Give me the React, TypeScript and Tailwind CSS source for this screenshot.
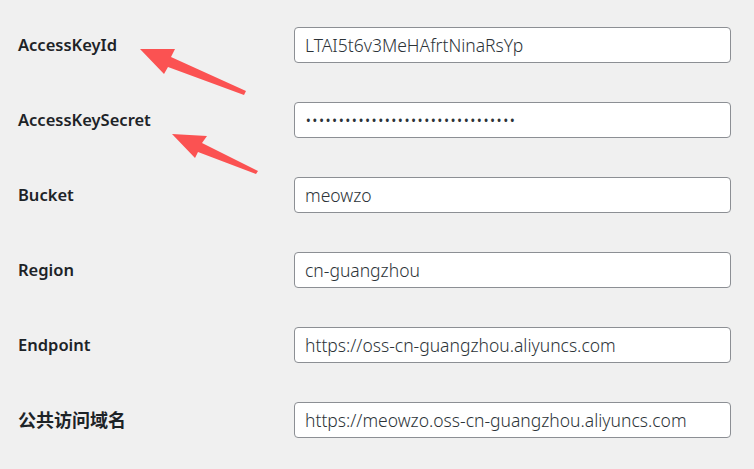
import React from "react";

type Field = {
    label: string;
    value: string;
    secret?: boolean;
    cjk?: boolean;
};

const fields: Field[] = [
    {label: "AccessKeyId", value: "LTAI5t6v3MeHAfrtNinaRsYp"},
    {label: "AccessKeySecret", value: "abcdefghijklmnopqrstuvwxyz123456", secret: true},
    {label: "Bucket", value: "meowzo"},
    {label: "Region", value: "cn-guangzhou"},
    {label: "Endpoint", value: "https://oss-cn-guangzhou.aliyuncs.com"},
    {label: "公共访问域名", value: "https://meowzo.oss-cn-guangzhou.aliyuncs.com", cjk: true},
];

const FieldRow = ({field}: { field: Field }) => (
    <div className="flex items-center h-[75px]">
        <label
            className={
                field.cjk
                    ? "w-[294px] pl-[18px] pt-[2px] text-[18px] font-semibold text-[#1d2327]"
                    : "w-[294px] pl-[18px] pt-[2px] text-[16.5px] font-semibold text-[#1d2327]"
            }
        >
            {field.label}
        </label>
        <input
            readOnly
            type={field.secret ? "password" : "text"}
            defaultValue={field.value}
            className="w-[437px] h-[36px] px-[10px] bg-white border border-[#8c8f94] rounded-[4px] text-[17.5px] font-light text-[#2c3338] outline-none"
        />
    </div>
);

// red annotation arrows drawn over the form
const Arrows = () => (
    <svg className="absolute inset-0 pointer-events-none" width="754" height="469" viewBox="0 0 754 469">
        <polygon
            fill="#fb5252"
            points="140,49 175,49 171,57 246,91 244,95 168,67 164,74"
        />
        <polygon
            fill="#fb5252"
            points="172,134 207,136 202,143 258,171 256,174 198,152 195,158"
        />
    </svg>
);

export default function App() {
    return (
        <div
            className="relative w-[754px] h-[469px] overflow-hidden bg-[#f0f0f0] pt-[7px]"
            style={{fontFamily: '"Noto Sans", "Noto Sans CJK SC", sans-serif'}}
        >
            {fields.map((f) => (
                <FieldRow key={f.label} field={f}/>
            ))}
            <Arrows/>
        </div>
    );
}
